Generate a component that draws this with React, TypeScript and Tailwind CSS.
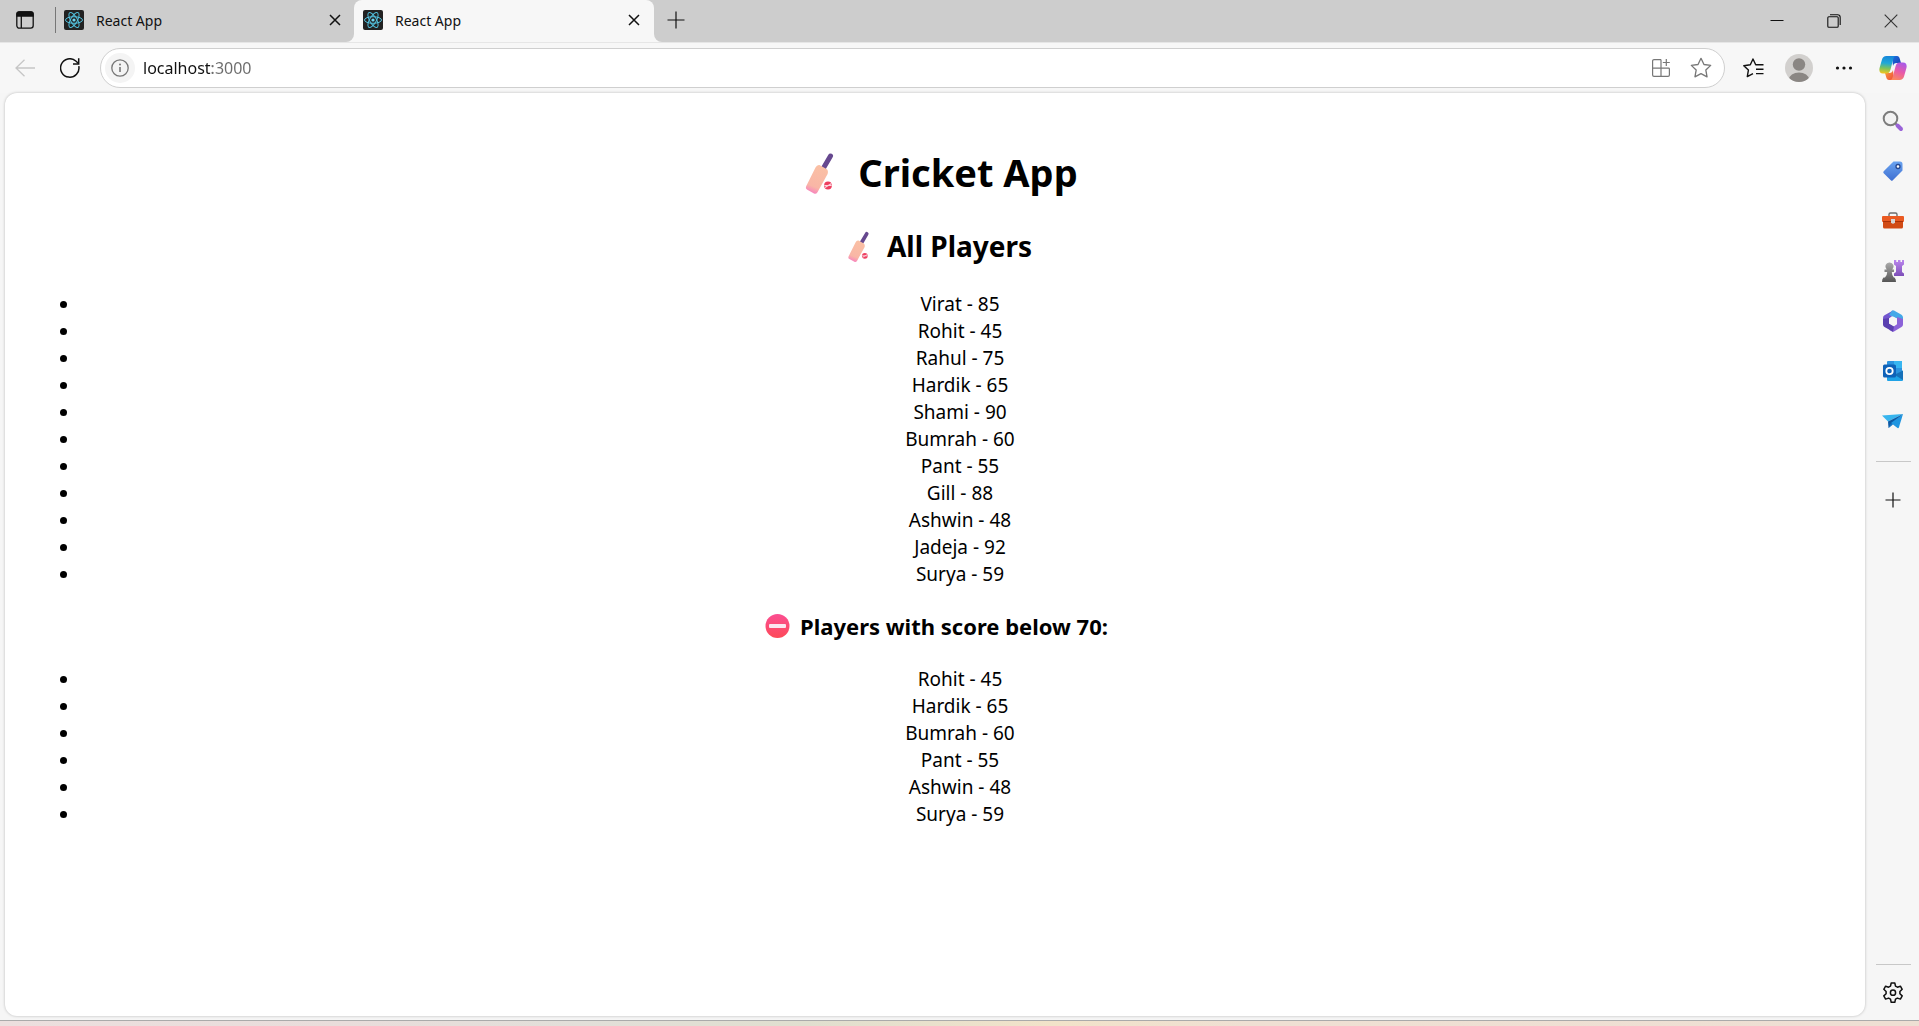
import React from "react";

type Player = { name: string; score: number };

const players: Player[] = [
  { name: "Virat", score: 85 },
  { name: "Rohit", score: 45 },
  { name: "Rahul", score: 75 },
  { name: "Hardik", score: 65 },
  { name: "Shami", score: 90 },
  { name: "Bumrah", score: 60 },
  { name: "Pant", score: 55 },
  { name: "Gill", score: 88 },
  { name: "Ashwin", score: 48 },
  { name: "Jadeja", score: 92 },
  { name: "Surya", score: 59 },
];

function Favicon() {
  return (
    <svg viewBox="0 0 20 20" className="size-5 shrink-0" fill="none" stroke="#53c1de" strokeWidth="1" aria-hidden="true">
      <rect width="20" height="20" rx="2" fill="#222" stroke="none" />
      <ellipse cx="10" cy="10" rx="8.5" ry="3.3" />
      <ellipse cx="10" cy="10" rx="8.5" ry="3.3" transform="rotate(60 10 10)" />
      <ellipse cx="10" cy="10" rx="8.5" ry="3.3" transform="rotate(120 10 10)" />
      <circle cx="10" cy="10" r="1.6" fill="#6fd8f2" stroke="none" />
    </svg>
  );
}

function TabClose() {
  return (
    <button aria-label="Close tab" className="flex size-6 shrink-0 items-center justify-center">
      <svg viewBox="0 0 12 12" className="size-3" stroke="#111" strokeWidth="1.5" aria-hidden="true">
        <path d="M1 1l10 10M11 1L1 11" />
      </svg>
    </button>
  );
}

function TabBar() {
  return (
    <header className="flex h-[42px] bg-[#f7f7f7] text-[14px] text-[#111]">
      <div className="flex w-[354px] shrink-0 items-center rounded-br-lg bg-[#cdcdcd] pr-[7px] pl-3 pb-[2px]">
        <button aria-label="Tab actions menu" className="flex size-[26px] items-center justify-center">
          <svg viewBox="0 0 18 18" className="size-[18px]" fill="none" stroke="#111" strokeWidth="1.3" aria-hidden="true">
            <rect x="0.8" y="0.8" width="16.4" height="16.4" rx="2.6" />
            <path d="M5.3 4v13" />
            <path d="M1 5V3a2 2 0 0 1 2-2h12a2 2 0 0 1 2 2v2z" fill="#111" />
          </svg>
        </button>
        <span className="ml-[17px] h-[26px] w-px bg-[#777]" />
        <button role="tab" aria-selected="false" className="ml-2 flex flex-1 items-center gap-3">
          <Favicon />
          <span>React App</span>
        </button>
        <TabClose />
      </div>
      <div className="w-[300px] shrink-0 bg-[#cdcdcd]">
        <div className="flex h-full items-center rounded-t-lg bg-[#f7f7f7] pr-2 pl-[9px] pb-[2px]">
          <button role="tab" aria-selected="true" className="flex flex-1 items-center gap-3">
            <Favicon />
            <span>React App</span>
          </button>
          <TabClose />
        </div>
      </div>
      <div className="flex flex-1 items-center justify-between rounded-bl-lg bg-[#cdcdcd] pl-[10px]">
        <button aria-label="New tab" className="flex size-6 items-center justify-center pb-[3px]">
          <svg viewBox="0 0 18 18" className="size-[18px]" stroke="#111" strokeWidth="1.2" aria-hidden="true">
            <path d="M9 0.5v17M0.5 9h17" />
          </svg>
        </button>
        <div className="flex">
          <button aria-label="Minimize" className="flex h-[42px] w-[57px] items-center justify-center">
            <svg viewBox="0 0 14 14" className="size-[14px]" stroke="#111" aria-hidden="true">
              <path d="M0.5 6.5h13" />
            </svg>
          </button>
          <button aria-label="Restore" className="flex h-[42px] w-[57px] items-center justify-center">
            <svg viewBox="0 0 14 14" className="size-[14px]" fill="none" stroke="#111" strokeWidth="1.1" aria-hidden="true">
              <rect x="0.8" y="2.8" width="10.4" height="10.4" rx="1" />
              <path d="M3 0.8h7.6a2.6 2.6 0 0 1 2.6 2.6V11" />
            </svg>
          </button>
          <button aria-label="Close" className="flex h-[42px] w-[57px] items-center justify-center">
            <svg viewBox="0 0 14 14" className="size-[14px]" stroke="#333" strokeWidth="1.1" aria-hidden="true">
              <path d="M0.7 0.7l12.6 12.6M13.3 0.7L0.7 13.3" />
            </svg>
          </button>
        </div>
      </div>
    </header>
  );
}

const starPath =
  "M10 1.2l2.7 5.6 6.1.8-4.4 4.3 1.1 6.1L10 15.1 4.5 18l1.1-6.1L1.2 7.6l6.1-.8z";

function Copilot() {
  return (
    <svg viewBox="0 0 28 26" className="h-[26px] w-7" aria-hidden="true">
      <defs>
        <linearGradient id="cpLeft" x1="0.4" y1="0" x2="0.3" y2="1">
          <stop offset="0" stopColor="#1686d9" />
          <stop offset="0.4" stopColor="#20a8d8" />
          <stop offset="0.7" stopColor="#7cc35c" />
          <stop offset="1" stopColor="#f5c51d" />
        </linearGradient>
        <linearGradient id="cpRight" x1="0.7" y1="0" x2="0.3" y2="1">
          <stop offset="0" stopColor="#a85ae8" />
          <stop offset="0.5" stopColor="#e95aa8" />
          <stop offset="1" stopColor="#fb8a5c" />
        </linearGradient>
        <linearGradient id="cpTop" x1="0" y1="0" x2="1" y2="1">
          <stop offset="0" stopColor="#1a6fe0" />
          <stop offset="1" stopColor="#1b3fae" />
        </linearGradient>
        <linearGradient id="cpBottom" x1="0" y1="0" x2="1" y2="1">
          <stop offset="0" stopColor="#f9a13a" />
          <stop offset="1" stopColor="#ee4b3b" />
        </linearGradient>
      </defs>
      <path d="M13 1h5c1.6 0 2.3 1 2.7 2.4L22 8h-4.5c-2 0-3 1.2-3.5 3z" fill="url(#cpTop)" />
      <path d="M15 25h-5c-1.6 0-2.3-1-2.7-2.4L6 18h4.5c2 0 3-1.2 3.5-3z" fill="url(#cpBottom)" />
      <path d="M7.5 1H17c-1.6 0-2.2 1.2-2.7 3L11.5 14.5C10.8 17 9.8 18.5 7 18.5H4c-3.500 0-4.200-3-3.300-6L3 4.500C3.700 2.200 5 1 7.500 1z" fill="url(#cpLeft)" />
      <path d="M20.500 25H11c1.600 0 2.200-1.200 2.700-3l2.800-10.500c.7-2.500 1.700-4 4.500-4h3c3.500 0 4.200 3 3.300 6L25 21.500c-.7 2.300-2 3.500-4.500 3.500z" fill="url(#cpRight)" />
    </svg>
  );
}

function Toolbar() {
  return (
    <div className="flex h-[51px] items-center border-t border-[#e6e6e6] bg-[#f7f7f7] pl-3">
      <button aria-label="Back" className="flex size-[26px] items-center justify-center">
        <svg viewBox="0 0 20 18" className="h-[18px] w-5" fill="none" stroke="#c6c6c6" strokeWidth="1.3" aria-hidden="true">
          <path d="M20 9H1M9.500.7L1 9l8.500 8.300" />
        </svg>
      </button>
      <button aria-label="Refresh" className="ml-[19px] flex size-[26px] items-center justify-center">
        <svg viewBox="0 0 20 20" className="size-5" fill="none" stroke="#111" strokeWidth="1.5" aria-hidden="true">
          <path d="M18.800 8.200A9.200 9.200 0 1 1 15.800 3l2.700 2.500" />
          <path d="M18.700.3v5.700H13" />
        </svg>
      </button>
      <div className="ml-[17px] flex h-10 flex-1 items-center rounded-full border border-[#cfcfcf] bg-white pr-3 pl-1">
        <button aria-label="View site information" className="flex size-[30px] items-center justify-center rounded-full bg-[#f4f4f4]">
          <svg viewBox="0 0 18 18" className="size-[18px]" fill="none" stroke="#777" strokeWidth="1.3" aria-hidden="true">
            <circle cx="9" cy="9" r="8.2" />
            <path d="M9 8v5" strokeWidth="1.6" />
            <circle cx="9" cy="5.5" r="1" fill="#777" stroke="none" />
          </svg>
        </button>
        <input
          aria-label="Address"
          defaultValue="localhost:3000"
          className="ml-2 min-w-0 flex-1 bg-[linear-gradient(to_right,#111_69px,#6b6b6b_69px)] bg-clip-text text-[16px] text-transparent outline-none"
        />
        <button aria-label="App available" className="flex w-10 justify-center">
          <svg viewBox="0 0 18 18" className="size-[18px]" fill="none" stroke="#777" strokeWidth="1.2" aria-hidden="true">
            <path d="M9 .6H2A1.400 1.400 0 0 0 .6 2v14A1.400 1.400 0 0 0 2 17.400h14a1.400 1.400 0 0 0 1.400-1.400V10a.8.8 0 0 0-.8-.8H.6M9 .6v16.800M14.300 0v7M10.800 3.500h7" />
          </svg>
        </button>
        <button aria-label="Add to favorites" className="-mr-[9px] flex w-10 justify-center">
          <svg viewBox="0 0 20 20" className="size-[22px]" fill="none" stroke="#777" strokeWidth="1.2" strokeLinejoin="round" aria-hidden="true">
            <path d={starPath} />
          </svg>
        </button>
      </div>
      <div className="flex items-center pl-[6px]">
        <button aria-label="Favorites" className="flex w-[45px] justify-center">
          <svg viewBox="0 0 21 20" className="h-5 w-[21px]" fill="none" stroke="#111" strokeWidth="1.4" strokeLinejoin="round" aria-hidden="true">
            <path d="M20.500 6.800H12.700L10 1 7.300 6.800.8 7.700l4.600 4.400-1.100 6.500L10 15.600M13 11.200h7.500M13 15.600h7.500" />
          </svg>
        </button>
        <button aria-label="Profile" className="flex w-[45px] justify-center">
          <svg viewBox="0 0 28 28" className="size-7" aria-hidden="true">
            <clipPath id="avatarClip"><circle cx="14" cy="14" r="14" /></clipPath>
            <g clipPath="url(#avatarClip)">
              <rect width="28" height="28" fill="#d2d0ce" />
              <circle cx="14" cy="10.500" r="6.200" fill="#8a8683" />
              <ellipse cx="14" cy="25.500" rx="10" ry="7" fill="#8a8683" />
            </g>
          </svg>
        </button>
        <button aria-label="Settings and more" className="flex w-[45px] justify-center">
          <svg viewBox="0 0 18 4" className="h-1 w-[18px]" fill="#111" aria-hidden="true">
            <circle cx="2.500" cy="2" r="1.600" /><circle cx="9" cy="2" r="1.600" /><circle cx="15.500" cy="2" r="1.600" />
          </svg>
        </button>
        <button aria-label="Copilot" className="flex w-[53px] justify-center">
          <Copilot />
        </button>
      </div>
    </div>
  );
}

function SearchIcon() {
  return (
    <svg viewBox="0 0 22 22" className="size-[22px]" fill="none" aria-hidden="true">
      <circle cx="8.500" cy="8.500" r="6.800" stroke="#7d7d7d" strokeWidth="2" fill="#f3f3f3" />
      <path d="M13.500 13.500l2 2" stroke="#777" strokeWidth="2" />
      <path d="M15.500 15.500l3.500 3.500" stroke="#9a63d8" strokeWidth="4" strokeLinecap="round" />
    </svg>
  );
}

function TagIcon() {
  return (
    <svg viewBox="0 0 22 22" className="size-[22px]" aria-hidden="true">
      <defs>
        <linearGradient id="tagFill" x1="0" y1="0" x2="0" y2="1">
          <stop offset="0" stopColor="#69a3f0" /><stop offset="1" stopColor="#3f6fd1" />
        </linearGradient>
      </defs>
      <path d="M11.500 1.500H18A2.500 2.500 0 0 1 20.500 4v6.500L10.800 20.300q-1 1-2 0L1.700 13.200q-1-1 0-2z" fill="url(#tagFill)" />
      <circle cx="16" cy="6.500" r="2" fill="#fff" stroke="#25478f" strokeWidth="1.300" />
    </svg>
  );
}

function ToolboxIcon() {
  return (
    <svg viewBox="0 0 22 22" className="size-[22px]" aria-hidden="true">
      <path d="M7 7V4.500A1.500 1.500 0 0 1 8.500 3h5A1.500 1.500 0 0 1 15 4.500V7" fill="none" stroke="#6d6d6d" strokeWidth="1.400" />
      <rect x="0" y="6" width="22" height="6" rx="1" fill="#ea5a22" />
      <path d="M1 11h20v6a1.500 1.500 0 0 1-1.500 1.500h-17A1.500 1.500 0 0 1 1 17z" fill="#d14a14" />
      <rect x="1" y="11" width="20" height="1" fill="#a93108" />
      <path d="M9 9h4v3.500q-2 2.500-4 0z" fill="#d5d5d5" />
    </svg>
  );
}

function GamesIcon() {
  return (
    <svg viewBox="0 0 22 24" className="h-6 w-[22px]" aria-hidden="true">
      <defs>
        <linearGradient id="pawnFill" x1="0" y1="0" x2="0" y2="1">
          <stop offset="0" stopColor="#aaa" /><stop offset="1" stopColor="#555" />
        </linearGradient>
        <linearGradient id="rookFill" x1="0" y1="0" x2="0" y2="1">
          <stop offset="0" stopColor="#bb86ee" /><stop offset="1" stopColor="#7d4fb8" />
        </linearGradient>
      </defs>
      <path d="M12 1h2.300v2h1.700V1h2.500v2H20V1h2v4.500l-2 1.500v6l2 1.500V17H12v-2.500l2-1.500V7l-2-1.500z" fill="url(#rookFill)" />
      <path d="M7.500 3.500a4 4 0 0 1 2.800 7H12v2.500H9.800q0 3.500 2 5.500h.7q1.500 1 1.500 4.500H0q0-3.500 1.500-4.500H3q2.200-2 2.200-5.500H2.500v-2.500H4.700a4 4 0 0 1 2.800-7z" fill="url(#pawnFill)" />
    </svg>
  );
}

function OfficeIcon() {
  return (
    <svg viewBox="0 0 22 22" className="size-[22px]" aria-hidden="true">
      <path d="M11 .5L2.500 5.200Q1 6 1 8v6.500l6-3.500V8.500L14 3z" fill="#7356cf" />
      <path d="M10 .6q1-.4 2 0l7.500 4.200Q21 5.700 21 7.500V11l-6 1V8.500L7 5z" fill="#43a8e8" />
      <path d="M21 9v5.500q0 1.700-1.500 2.600L12 21.500q-1 .5-2 0L7 19.700l8-5.500V7z" fill="#8b62d8" />
      <path d="M1 9l6-1v5.500l5 3-1 5.300-8.500-4.700Q1 16.200 1 14.500z" fill="#5a3fb0" />
      <path d="M11 6.500l4 2.300v4.400l-4 2.300-4-2.300V8.800z" fill="#f5f5f5" />
    </svg>
  );
}

function OutlookIcon() {
  return (
    <svg viewBox="0 0 22 22" className="size-[22px]" aria-hidden="true">
      <rect x="5" y="1" width="15" height="14" rx="1" fill="#2c93df" />
      <rect x="12" y="1" width="8" height="7" fill="#38b6f1" />
      <path d="M5 10.500L13 15l8-4.500V20q0 1-1 1H6q-1 0-1-1z" fill="#1fa2e6" />
      <path d="M21 10.500V20L12.500 14.800z" fill="#1670b8" />
      <rect x="1" y="4.500" width="13" height="13" rx="1.500" fill="#0f62b8" />
      <circle cx="7.500" cy="11" r="3.200" fill="none" stroke="#fff" strokeWidth="1.800" />
    </svg>
  );
}

function DropIcon() {
  return (
    <svg viewBox="0 0 22 22" className="size-[22px]" aria-hidden="true">
      <path d="M0 5.500L21 4 6 11.500z" fill="#37b5ee" />
      <path d="M21 4L6 11.500 6.500 18z" fill="#0c59a4" />
      <path d="M21 4L9 13l6.500 5q1 .5 1.400-.6z" fill="#1f95e0" />
      <path d="M9 13l-2.500 5 4.500-3.500z" fill="#1776c4" />
    </svg>
  );
}

const sidebarItems = [
  { label: "Search", Icon: SearchIcon },
  { label: "Shopping", Icon: TagIcon },
  { label: "Tools", Icon: ToolboxIcon },
  { label: "Games", Icon: GamesIcon },
  { label: "Microsoft 365", Icon: OfficeIcon },
  { label: "Outlook", Icon: OutlookIcon },
  { label: "Drop", Icon: DropIcon },
];

function Sidebar() {
  return (
    <nav aria-label="Sidebar" className="flex w-[54px] shrink-0 flex-col items-center pt-[3px] pl-[2px]">
      {sidebarItems.map(({ label, Icon }) => (
        <button key={label} aria-label={label} className="flex h-[50px] w-full items-center justify-center">
          <Icon />
        </button>
      ))}
      <span className="mt-[15px] h-px w-[35px] bg-[#c8c8c8]" />
      <button aria-label="Customize sidebar" className="mt-[26px] flex size-6 items-center justify-center">
        <svg viewBox="0 0 16 16" className="size-4" stroke="#111" strokeWidth="1.200" aria-hidden="true">
          <path d="M8 .5v15M.5 8h15" />
        </svg>
      </button>
      <span className="mt-auto h-px w-[35px] bg-[#c8c8c8]" />
      <button aria-label="Settings" className="mt-4 mb-[11px] flex size-6 items-center justify-center">
        <svg viewBox="0 0 22 22" className="size-[22px]" fill="none" stroke="#111" strokeWidth="1.500" strokeLinejoin="round" aria-hidden="true">
          <path d="M9.200 1h3.600l.7 3.100 1.900 1.100 3-1 1.800 3.100-2.300 2.200v2.200l2.300 2.200-1.800 3.200-3-1-1.900 1.100-.7 3.100H9.200l-.7-3.100-1.900-1.100-3 1-1.800-3.200 2.300-2.200V9.500L1.800 7.300l1.800-3.100 3 1 1.900-1.100z" />
          <circle cx="11" cy="10.700" r="2.600" />
        </svg>
      </button>
    </nav>
  );
}

function CricketBat({ id, className }: { id: string; className: string }) {
  return (
    <svg viewBox="0 0 55 44" className={className} role="img" aria-label="Cricket bat and ball">
      <defs>
        <linearGradient id={id} x1="0.600" y1="0" x2="0.300" y2="1">
          <stop offset="0" stopColor="#fac0a4" /><stop offset="0.750" stopColor="#f9b6a6" /><stop offset="1" stopColor="#f77fc0" />
        </linearGradient>
      </defs>
      <path d="M38.500 5L31.500 17" stroke="#66488f" strokeWidth="5" strokeLinecap="round" />
      <path d="M27.500 14q-2.500-.5-4 2.500L14.300 35q-1.200 2.500 1 3.800l6.700 3.700q2 1 3.500-1.200L35.600 23q1.200-4-1.600-5.300z" fill={`url(#${id})`} />
      <circle cx="36" cy="34.500" r="3.900" fill="#ee3f60" />
      <path d="M32.300 34.500h7.400M33 36.600l6.500-4" stroke="#fbd3dc" strokeWidth="1.200" />
    </svg>
  );
}

function NoEntry() {
  return (
    <svg viewBox="0 0 32 32" className="size-8" role="img" aria-label="No entry">
      <defs>
        <linearGradient id="noEntryFill" x1="0" y1="0" x2="0" y2="1">
          <stop offset="0" stopColor="#fb4e92" /><stop offset="1" stopColor="#fd4958" />
        </linearGradient>
      </defs>
      <circle cx="15.500" cy="16" r="12" fill="url(#noEntryFill)" />
      <rect x="7" y="14" width="17" height="4" rx="1" fill="#fbe6f1" />
    </svg>
  );
}

function PlayerList({ items }: { items: Player[] }) {
  return (
    <ul className="list-disc pl-[50px] text-[19px] leading-[27px]">
      {items.map((p) => (
        <li key={p.name}>
          {p.name} - {p.score}
        </li>
      ))}
    </ul>
  );
}

export default function App() {
  return (
    <div className="flex min-h-screen flex-col bg-[#f6f6f6] font-['Noto_Sans',sans-serif] text-black">
      <TabBar />
      <Toolbar />
      <div className="flex flex-1 pb-1">
        <main className="ml-[5px] flex-1 rounded-xl bg-white p-[25px] text-center shadow-[0_0_3px_rgba(0,0,0,0.250)]">
          <h1 className="mt-7 flex items-center justify-center gap-[11px] text-[38px] leading-[53px] font-bold">
            <CricketBat id="batLarge" className="h-11 w-[55px]" />
            Cricket App
          </h1>
          <h2 className="mt-[27px] mb-[25px] flex items-center justify-center gap-2 text-[28px] leading-10 font-bold">
            <CricketBat id="batSmall" className="h-[33px] w-[41px]" />
            All Players
          </h2>
          <PlayerList items={players} />
          <h3 className="mt-[22px] mb-6 flex items-center justify-center gap-[6px] text-[22px] leading-8 font-bold">
            <NoEntry />
            Players with score below 70:
          </h3>
          <PlayerList items={players.filter((p) => p.score < 70)} />
        </main>
        <Sidebar />
      </div>
      <footer className="h-[6px] border-t border-[#aaa] bg-[linear-gradient(to_right,#ecdfde_0%,#e9dddb_18%,#e2dfd9_30%,#e0dfcf_42%,#f2e3c9_55%,#efe0d3_65%,#eedfd3_100%)]" />
    </div>
  );
}
